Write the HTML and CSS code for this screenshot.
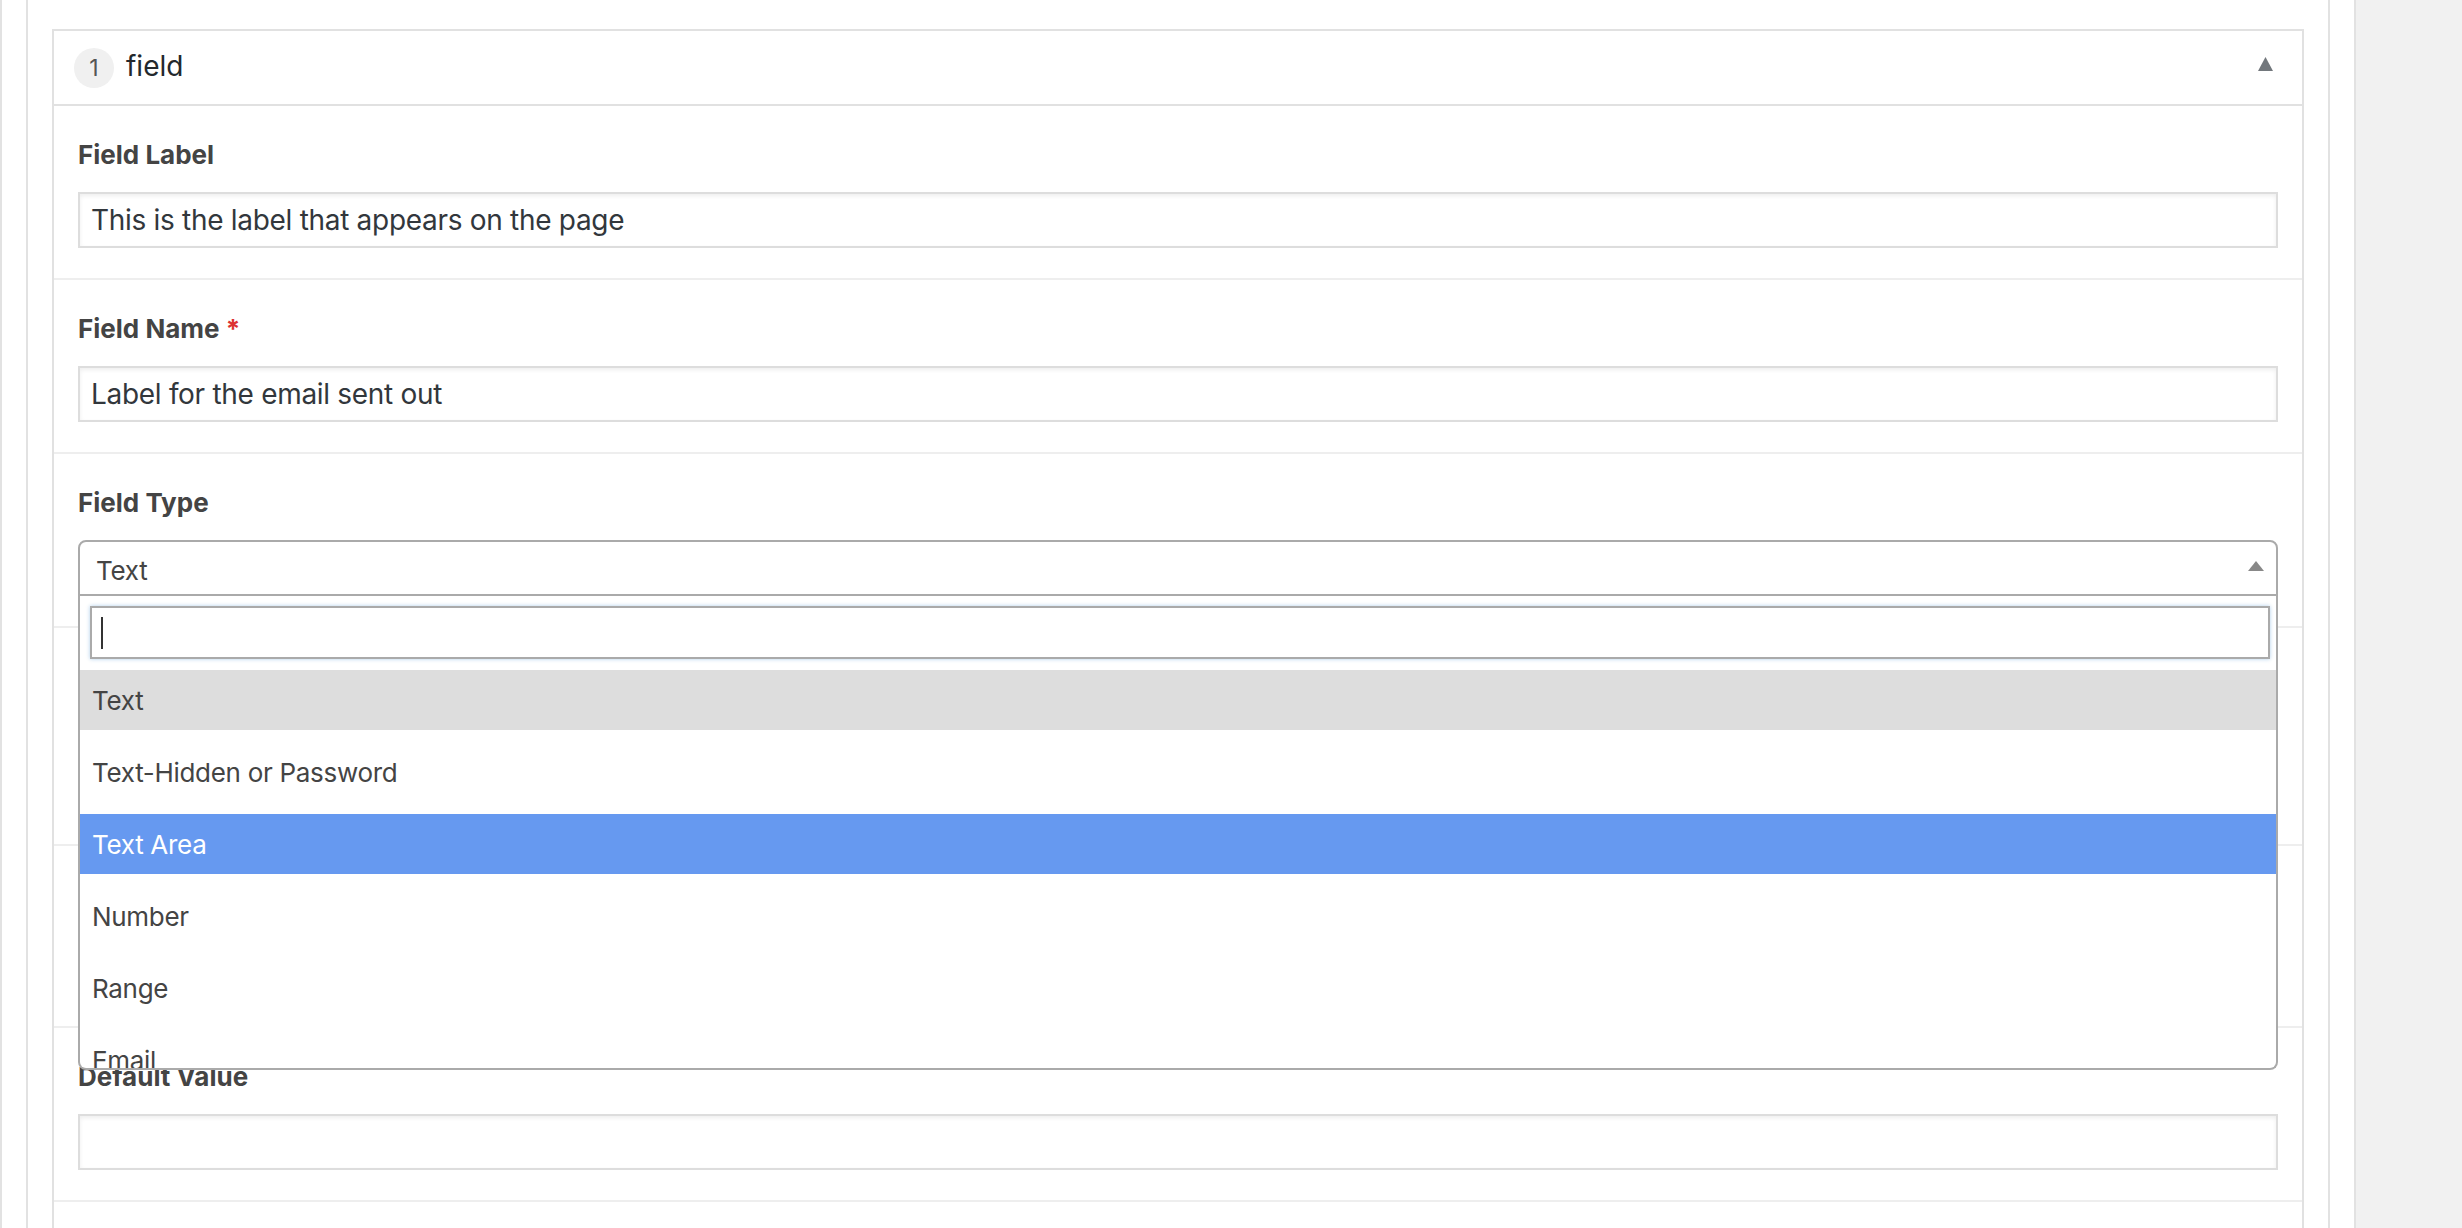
FILE: index.html
```html
<!DOCTYPE html>
<html lang="en">
<head>
<meta charset="utf-8">
<title>Field settings</title>
<link rel="stylesheet" href="styles.css">
</head>
<body>
<div class="screen">
  <div class="main">
    <div class="box">
      <div class="panel">
        <div class="panel-head">
          <span class="order">1</span>
          <span class="title">field</span>
          <svg class="toggle" width="15" height="14" viewBox="0 0 15 14"><polygon points="7.5,0 15,14 0,14" fill="#72777c"/></svg>
        </div>

        <div class="row">
          <div class="lbl">Field Label</div>
          <input class="txt" type="text" value="This is the label that appears on the page">
        </div>

        <div class="row">
          <div class="lbl">Field Name <span class="req">*</span></div>
          <input class="txt" type="text" value="Label for the email sent out">
        </div>

        <div class="row">
          <div class="lbl">Field Type</div>
          <div class="sel">
            <div class="sel-box">
              <span class="sel-value">Text</span>
              <span class="sel-arrow"></span>
            </div>
            <div class="drop">
              <div class="drop-search">
                <div class="search-field"><span class="caret"></span></div>
              </div>
              <ul class="options">
                <li class="opt opt-current">Text</li>
                <li class="opt">Text-Hidden or Password</li>
                <li class="opt opt-hover">Text Area</li>
                <li class="opt">Number</li>
                <li class="opt">Range</li>
                <li class="opt">Email</li>
                <li class="opt">URL</li>
              </ul>
            </div>
          </div>
        </div>

        <div class="row">
          <div class="lbl">Instructions</div>
          <p class="desc">Instructions for authors. Shown when submitting data</p>
          <input class="txt" type="text" value="">
        </div>

        <div class="row">
          <div class="lbl">Required?</div>
          <input class="txt txt-tall" type="text" value="">
        </div>

        <div class="row">
          <div class="lbl">Default Value</div>
          <input class="txt" type="text" value="">
        </div>

        <div class="row">
          <div class="lbl">Placeholder Text</div>
          <input class="txt" type="text" value="">
        </div>
      </div>
    </div>
  </div>
  <div class="side"></div>
</div>
</body>
</html>
```

FILE: styles.css
```css
html, body {
  margin: 0;
  padding: 0;
  height: 100%;
  overflow: hidden;
}

body {
  background: #f1f1f1;
  font-family: "Inter", "Liberation Sans", sans-serif;
  color: #444;
}

.screen {
  display: flex;
  min-height: 100vh;
}

.main {
  width: 2356px;
  box-sizing: border-box;
  background: #fff;
  border-left: 2px solid #e2e2e2;
  border-right: 2px solid #e2e2e2;
  padding: 0 24px;
  display: flex;
}

.side {
  flex: 1;
  background: #f1f1f1;
}

.box {
  flex: 1;
  border-left: 2px solid #e2e2e2;
  border-right: 2px solid #e2e2e2;
  padding: 29px 24px 0;
}

.panel {
  border: 2px solid #e1e1e1;
  border-bottom: none;
  background: #fff;
}

.panel-head {
  height: 73px;
  display: flex;
  align-items: center;
  padding: 0 29px 0 20px;
  border-bottom: 2px solid #e1e1e1;
}

.order {
  width: 40px;
  height: 40px;
  border-radius: 50%;
  background: #f0f0f0;
  color: #555;
  font-size: 23px;
  display: flex;
  align-items: center;
  justify-content: center;
}

.title {
  margin: -3px 0 0 12px;
  font-size: 28px;
  color: #23282d;
  flex: 1;
}

.toggle {
  display: block;
  margin-top: -7px;
}

.row {
  padding: 31px 24px 30px;
  border-bottom: 2px solid #eee;
}

.lbl {
  font-size: 26px;
  line-height: 36px;
  font-weight: 700;
  color: #444;
  margin-bottom: 19px;
}

.req {
  color: #dc3232;
}

.desc {
  margin: -11px 0 19px;
  font-size: 26px;
  line-height: 36px;
  color: #777;
}

.txt {
  display: block;
  width: 100%;
  box-sizing: border-box;
  height: 56px;
  margin: 0;
  border: 2px solid #ddd;
  border-radius: 0;
  box-shadow: inset 0 2px 4px rgba(0, 0, 0, 0.07);
  padding: 0 11px;
  font-family: inherit;
  font-size: 28px;
  letter-spacing: -0.3px;
  color: #32373c;
  background: #fff;
  outline: none;
}

.txt-tall {
  height: 64px;
}

.sel {
  position: relative;
}

.sel-box {
  height: 56px;
  box-sizing: border-box;
  border: 2px solid #aaa;
  border-radius: 8px 8px 0 0;
  display: flex;
  align-items: center;
  padding: 0 12px 0 16px;
}

.sel-value {
  flex: 1;
  font-size: 26px;
  letter-spacing: -0.3px;
  color: #444;
  margin-top: 4px;
}

.sel-arrow {
  width: 0;
  height: 0;
  border-left: 8px solid transparent;
  border-right: 8px solid transparent;
  border-bottom: 10px solid #888;
  margin-top: -4px;
}

.drop {
  position: absolute;
  top: 100%;
  left: 0;
  right: 0;
  z-index: 10;
  background: #fff;
  border: 2px solid #aaa;
  border-top: none;
  border-radius: 0 0 8px 8px;
  height: 472px;
  overflow: hidden;
}

.drop-search {
  padding: 10px 6px 11px 10px;
}

.search-field {
  height: 53px;
  box-sizing: border-box;
  border: 2px solid #aaa;
  box-shadow: 0 0 4px rgba(80, 150, 210, 0.45);
  display: flex;
  align-items: center;
  padding-left: 9px;
}

.caret {
  width: 2px;
  height: 32px;
  background: #333;
}

.options {
  list-style: none;
  margin: 0;
  padding: 0;
  display: flex;
  flex-direction: column;
  gap: 12px;
}

.opt {
  height: 60px;
  display: flex;
  align-items: center;
  padding: 0 12px;
  font-size: 26px;
  letter-spacing: -0.3px;
  color: #444;
}

.opt-current {
  background: #ddd;
}

.opt-hover {
  background: #6699f0;
  color: #fff;
}
```
